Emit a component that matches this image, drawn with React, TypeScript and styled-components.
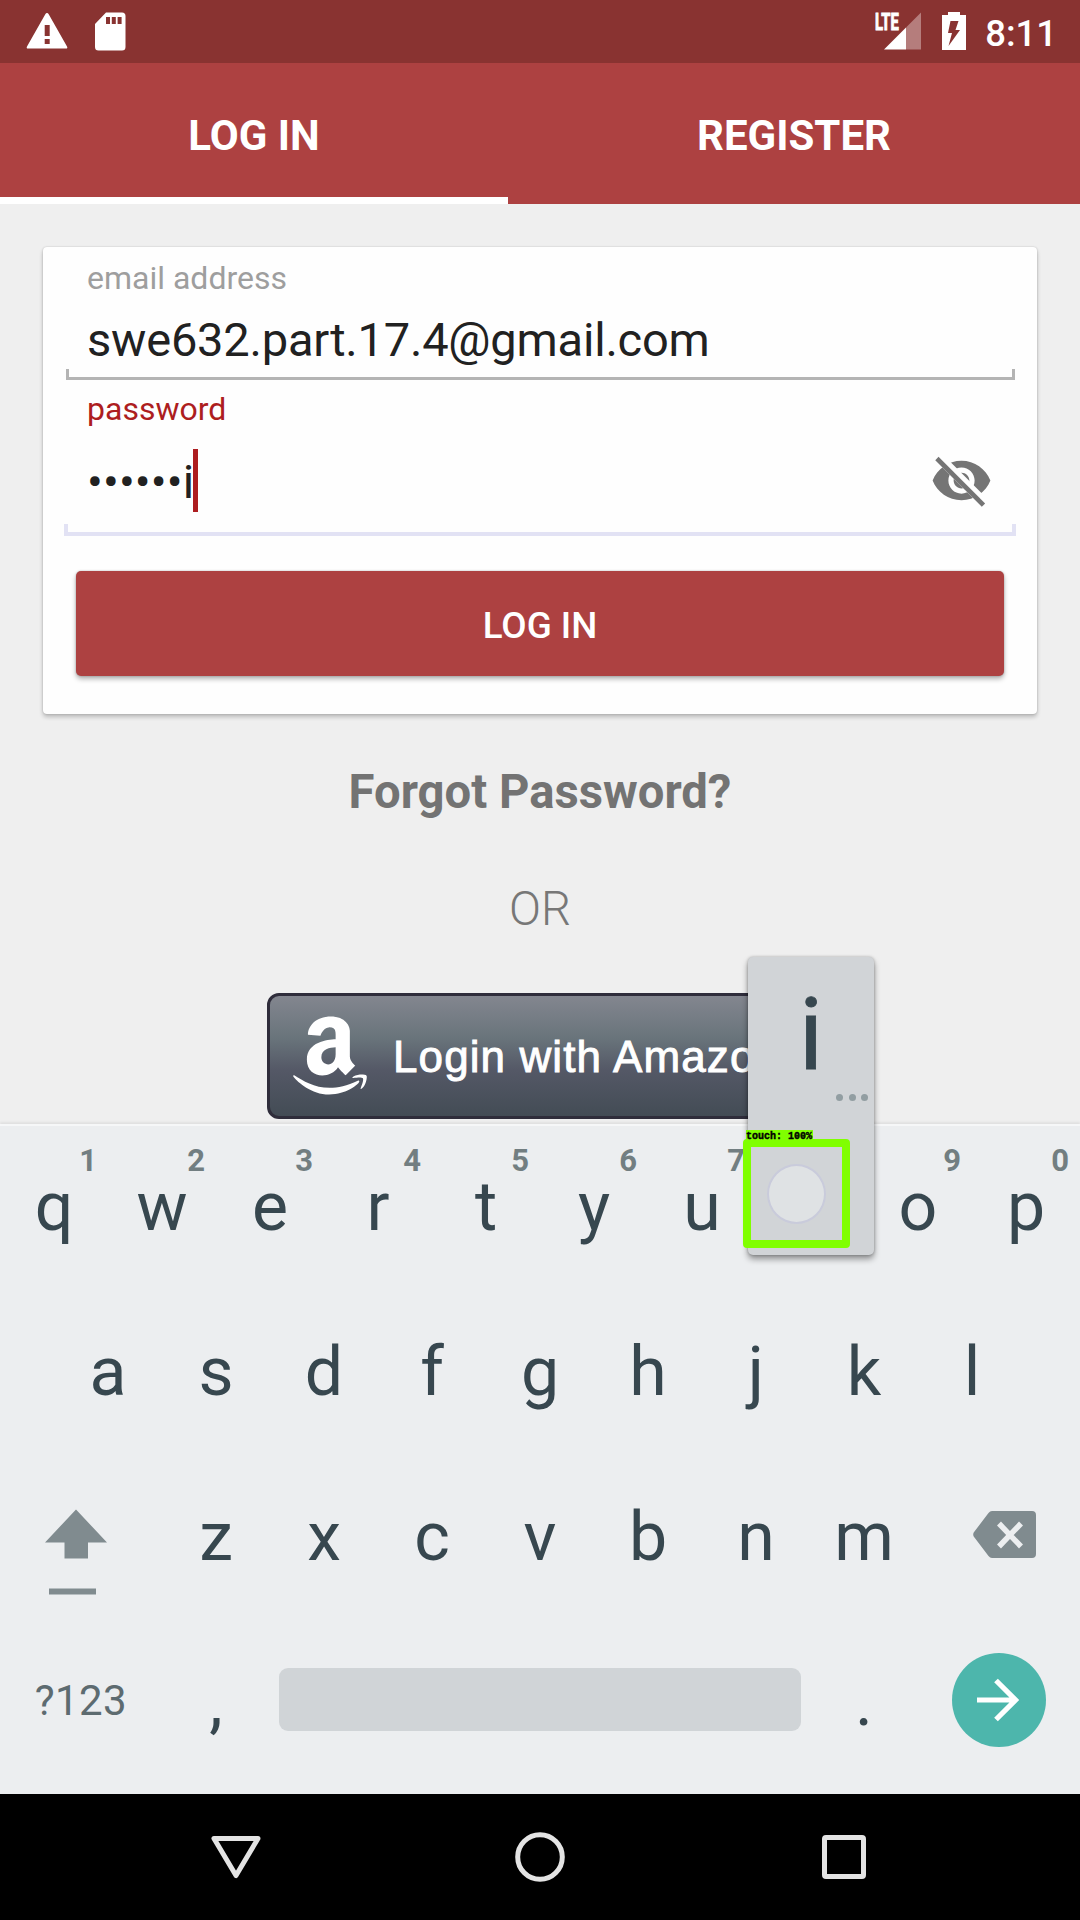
import React from 'react';
import styled, { createGlobalStyle } from 'styled-components';
import { FaAmazon } from 'react-icons/fa';

const GlobalStyle = createGlobalStyle`
  * { box-sizing: border-box; }
  body { margin: 0; background: #efefef; font-family: Roboto, "Noto Sans", sans-serif; }
  button { font: inherit; border: 0; padding: 0; background: none; color: inherit; }
  svg { display: block; flex: none; }
`;

const Screen = styled.div`
  position: relative;
  display: flex;
  flex-direction: column;
  width: 1080px;
  height: 1920px;
  overflow: hidden;
`;

/* Status bar */
const StatusBar = styled.header`
  display: flex;
  justify-content: space-between;
  height: 63px;
  padding: 12px 23px 0 26px;
  background: #893331;
  color: #fff;
`;
const StatusGroup = styled.div<{ $gap: number }>`
  display: flex;
  align-items: flex-start;
  gap: ${(p) => p.$gap}px;
`;
const Signal = styled.div`
  display: flex;
  align-items: flex-start;
`;
const NetworkType = styled.span`
  width: 9px;
  padding-top: 2px;
  font-size: 23px;
  line-height: 18px;
  font-weight: 700;
  white-space: nowrap;
  transform: scaleX(0.64);
  transform-origin: left;
  -webkit-text-stroke: 1px #fff;
`;
const Clock = styled.time`
  margin-left: -2px;
  font-size: 36.5px;
  font-weight: 500;
  line-height: 43px;
`;

/* Tabs */
const Tabs = styled.nav`
  display: flex;
  height: 141px;
  background: #ad4141;
`;
const Tab = styled.button<{ $width: number; $active?: boolean }>`
  width: ${(p) => p.$width}px;
  padding-top: 10px;
  border-bottom: 7px solid ${(p) => (p.$active ? '#fff' : 'transparent')};
  color: #fff;
  font-size: 42px;
  font-weight: 700;
`;

/* Login form */
const Content = styled.main`
  display: flex;
  flex-direction: column;
  align-items: center;
  height: 920px;
  padding-top: 43px;
  overflow: hidden;
  background: #efefef;
`;
const Card = styled.div`
  display: flex;
  flex-direction: column;
  flex: none;
  width: 994px;
  height: 467px;
  padding: 12px 21px 0;
  border-radius: 4px;
  background: #fefefe;
  box-shadow: 0 0 2px rgba(0, 0, 0, 0.2), 0 3px 4px rgba(0, 0, 0, 0.22);
`;
const Field = styled.div<{ $height: number }>`
  display: flex;
  flex-direction: column;
  height: ${(p) => p.$height}px;
`;
const FieldLabel = styled.label<{ $color: string; $top?: number }>`
  height: 38px;
  margin-top: ${(p) => p.$top ?? 0}px;
  padding-left: 23px;
  font-size: 32px;
  line-height: 38px;
  color: ${(p) => p.$color};
`;
const FieldValue = styled.div<{ $top: number }>`
  display: flex;
  align-items: center;
  height: 63px;
  margin-top: ${(p) => p.$top}px;
  padding: 0 23px;
  font-size: 47px;
  line-height: 56px;
  letter-spacing: -0.2px;
  color: #212121;
`;
const Secret = styled.span`
  padding-top: 3px;
  letter-spacing: 0.1px;
`;
const Cursor = styled.span`
  width: 5px;
  height: 63px;
  margin-left: -1px;
  background: #ad1d20;
`;
const Reveal = styled.button`
  margin-left: auto;
`;
const Bracket = styled.div<{ $active?: boolean }>`
  height: ${(p) => (p.$active ? 12 : 11)}px;
  margin: auto ${(p) => (p.$active ? '0 0 0' : '1px 0 2px')};
  border: ${(p) => (p.$active ? '4px solid #e2e2f4' : '3px solid #b4b4b4')};
  border-top: 0;
`;
const SubmitButton = styled.button`
  height: 105px;
  margin: 35px 12px 0;
  padding-top: 3px;
  border-radius: 5px;
  background: #ad4141;
  box-shadow: 0 0 2px rgba(0, 0, 0, 0.25), 0 3px 5px rgba(0, 0, 0, 0.3);
  color: #fff;
  font-size: 36.75px;
  font-weight: 500;
`;
const Forgot = styled.a`
  margin-top: 50px;
  font-size: 47.25px;
  line-height: 56px;
  font-weight: 700;
  color: #737373;
`;
const Or = styled.div`
  margin-top: 61px;
  font-size: 47.25px;
  line-height: 56px;
  font-weight: 300;
  color: #777;
`;
const AmazonButton = styled.button`
  display: flex;
  align-items: center;
  flex: none;
  width: 546px;
  height: 126px;
  margin-top: 56px;
  padding-left: 22px;
  border: 3px solid #2f2d3b;
  border-radius: 12px;
  background: linear-gradient(#83868f, #69747b 35%, #545866 62%, #434c55);
  color: #fff;
`;
const AmazonMark = styled(FaAmazon)`
  width: 76px;
  height: 89px;
  margin-bottom: 2px;
`;
const AmazonText = styled.span`
  margin-left: 25px;
  padding-top: 2px;
  font-family: "Liberation Sans", Arial, sans-serif;
  font-size: 44px;
  letter-spacing: 1.1px;
  white-space: nowrap;
  -webkit-text-stroke: 0.9px #fff;
`;

/* Keyboard */
const Keyboard = styled.section`
  height: 670px;
  background: #eceef0;
  box-shadow: inset 0 2px #f6f7f8, 0 -2px 2px rgba(0, 0, 0, 0.06);
  color: #37474f;
`;
const KeyRow = styled.div`
  display: flex;
  justify-content: center;
  height: 165px;
`;
const Key = styled.button<{ $width?: number }>`
  position: relative;
  display: flex;
  align-items: center;
  justify-content: center;
  width: ${(p) => p.$width ?? 108}px;
  height: 165px;
  font-size: 68px;
  line-height: 80px;
`;
const Hint = styled.span`
  position: absolute;
  top: 19px;
  right: 11px;
  font-size: 31px;
  line-height: 36px;
  font-weight: 700;
  color: #727e81;
`;
const ShiftIcon = styled.svg`
  margin: 30px 1px 0 0;
`;
const BackspaceIcon = styled.svg`
  margin: -4px 0 0 11px;
`;
const SymbolsLabel = styled.span`
  margin-top: -2px;
  font-size: 42px;
  line-height: 48px;
  letter-spacing: 0.4px;
  color: #5d6b70;
`;
const Spacebar = styled.button`
  width: 522px;
  height: 63px;
  margin: 49px 9px 0;
  border-radius: 9px;
  background: #d0d4d7;
`;
const Enter = styled.span`
  display: flex;
  align-items: center;
  justify-content: center;
  width: 94px;
  height: 94px;
  margin-top: -3px;
  padding-right: 2px;
  border-radius: 50%;
  background: #4db6ac;
`;

/* Key preview and touch marker float above the keyboard */
const Preview = styled.div`
  position: absolute;
  left: 748px;
  top: 957px;
  display: flex;
  flex-direction: column;
  align-items: center;
  width: 126px;
  height: 298px;
  padding-top: 19px;
  border-radius: 5px;
  background: #d1d4d7;
  box-shadow: 0 0 3px rgba(0, 0, 0, 0.25), 0 4px 6px rgba(0, 0, 0, 0.4);
  color: #37474f;
  font-size: 101px;
  line-height: 118px;
  -webkit-text-stroke: 0.8px #37474f;
`;
const MoreDots = styled.div`
  display: flex;
  align-self: flex-end;
  gap: 5.5px;
  padding-right: 6px;
`;
const Dot = styled.i`
  width: 7px;
  height: 7px;
  border-radius: 50%;
  background: #929ea2;
`;
const Touch = styled.div`
  position: absolute;
  left: 743px;
  top: 1139px;
  display: flex;
  align-items: center;
  justify-content: center;
  width: 107px;
  height: 109px;
  border: 8px solid #80ff00;
  border-radius: 4px;
`;
const TouchLabel = styled.span`
  position: absolute;
  left: -5px;
  top: -17px;
  width: 67px;
  height: 12px;
  background: #80ff00;
  color: #000;
  font: 700 10px/14px "Liberation Mono", "Courier New", monospace;
  white-space: nowrap;
  -webkit-text-stroke: 0.4px #000;
`;
const TouchPoint = styled.span`
  width: 59px;
  height: 60px;
  border: 2px solid #c9cbdb;
  border-radius: 50%;
  background: #dfe2e4;
`;

const NavBar = styled.footer`
  display: flex;
  align-items: flex-start;
  justify-content: center;
  gap: 253px;
  height: 126px;
  padding-top: 38px;
  background: #000;
`;

const numberRow = ['q', 'w', 'e', 'r', 't', 'y', 'u', '', 'o', 'p'];
const hints = ['1', '2', '3', '4', '5', '6', '7', '', '9', '0'];

export default function App() {
  return (
    <Screen>
      <GlobalStyle />
      <StatusBar>
        <StatusGroup $gap={27}>
          <svg width="42" height="38" viewBox="0 0 42 38">
            <path fill="#fff" fillRule="evenodd" d="M21 1q1 0 1.7 1.2L41 34.500q1 2-1 2H2q-2 0-1-2L19.300 2.200Q20 1 21 1ZM18.700 13v11h5V13ZM18.700 27v5h5v-5Z" />
          </svg>
          <svg width="31" height="39" viewBox="0 0 31 39">
            <path fill="#fff" fillRule="evenodd" d="M11 .5h16q3.500 0 3.500 3.500v31q0 3.500-3.500 3.500H3.500Q0 38.500 0 35V12ZM11 5v7h4V5ZM16.800 5v7h4V5ZM22.600 5v7h4V5Z" />
          </svg>
        </StatusGroup>
        <StatusGroup $gap={21}>
          <Signal>
            <NetworkType>LTE</NetworkType>
            <svg width="37" height="38" viewBox="0 0 37 38">
              <path fill="#b57d7c" d="M37 .5v37H22V15.500Z" />
              <path fill="#fff" d="M22 15.500v22H0Z" />
            </svg>
          </Signal>
          <svg width="24" height="38" viewBox="0 0 24 38">
            <path fill="#fff" fillRule="evenodd" d="M6 0h12v3h6v35H0V3h6ZM8.500 9 6 21h4L6.500 34 18 18h-4.500L16.500 9Z" />
          </svg>
          <Clock>8:11</Clock>
        </StatusGroup>
      </StatusBar>
      <Tabs>
        <Tab $width={508} $active>LOG IN</Tab>
        <Tab $width={572}>REGISTER</Tab>
      </Tabs>
      <Content>
        <Card>
          <Field $height={121}>
            <FieldLabel $color="#9e9e9e">email address</FieldLabel>
            <FieldValue $top={13}>swe632.part.17.4@gmail.com</FieldValue>
            <Bracket />
          </Field>
          <Field $height={156}>
            <FieldLabel $color="#ad1d20" $top={10}>password</FieldLabel>
            <FieldValue $top={21}>
              <Secret>••••••i</Secret>
              <Cursor />
              <Reveal aria-label="Show password">
                <svg width="63" height="63" viewBox="0 0 24 24">
                  <path fill="#757575" d="M12 4.500C7 4.500 2.730 7.610 1 12c1.730 4.390 6 7.500 11 7.500s9.270-3.110 11-7.500c-1.730-4.390-6-7.500-11-7.500zM12 17c-2.760 0-5-2.240-5-5s2.240-5 5-5 5 2.240 5 5-2.240 5-5 5zm0-8c-1.660 0-3 1.340-3 3s1.340 3 3 3 3-1.340 3-3-1.340-3-3-3z" />
                  <path fill="#fefefe" d="M2 4.270 19.730 22 22.270 19.460 4.540 1.730Z" />
                  <path fill="none" stroke="#757575" strokeWidth="1.8" strokeLinecap="square" d="M3.270 4.270 19.740 20.740" />
                </svg>
              </Reveal>
            </FieldValue>
            <Bracket $active />
          </Field>
          <SubmitButton>LOG IN</SubmitButton>
        </Card>
        <Forgot>Forgot Password?</Forgot>
        <Or>OR</Or>
        <AmazonButton>
          <AmazonMark preserveAspectRatio="none" />
          <AmazonText>Login with Amazon</AmazonText>
        </AmazonButton>
      </Content>
      <Keyboard>
        <KeyRow>
          {numberRow.map((k, i) => (
            <Key key={i}>
              {k}
              <Hint>{hints[i]}</Hint>
            </Key>
          ))}
        </KeyRow>
        <KeyRow>
          {[...'asdfghjkl'].map((k) => <Key key={k}>{k}</Key>)}
        </KeyRow>
        <KeyRow>
          <Key $width={162} aria-label="Shift">
            <ShiftIcon width="72" height="86" viewBox="0 0 72 86">
              <path fill="#808b8f" d="M31 .5 62 33.500H43v16H19.500V33.500H0ZM4 79.500h47v6H4Z" />
            </ShiftIcon>
          </Key>
          {[...'zxcvbnm'].map((k) => <Key key={k}>{k}</Key>)}
          <Key $width={162} aria-label="Backspace">
            <BackspaceIcon width="63" height="47" viewBox="0 0 63 47">
              <path fill="#808b8f" d="M19 0h40q4 0 4 4v39q0 4-4 4H19q-2 0-3.500-2L.7 25.500q-1-2 0-4L15.500 2Q17 0 19 0Z" />
              <path stroke="#eceef0" strokeWidth="5.500" d="m26 12.500 22 23m0-23-22 23" />
            </BackspaceIcon>
          </Key>
        </KeyRow>
        <KeyRow>
          <Key $width={162}><SymbolsLabel>?123</SymbolsLabel></Key>
          <Key>,</Key>
          <Spacebar aria-label="Space" />
          <Key>.</Key>
          <Key $width={162} aria-label="Next">
            <Enter>
              <svg width="44" height="44" viewBox="0 0 44 44">
                <path fill="none" stroke="#fff" strokeWidth="5.200" d="M1 22h38M20 2.500 39.500 22 20 41.500" />
              </svg>
            </Enter>
          </Key>
        </KeyRow>
      </Keyboard>
      <NavBar>
        <svg width="52" height="50" viewBox="0 0 52 50">
          <path fill="none" stroke="#e4e4e4" strokeWidth="5" strokeLinejoin="round" d="M4 6.500h44L26 43.500Z" />
        </svg>
        <svg width="50" height="50" viewBox="0 0 50 50">
          <circle cx="25" cy="25" r="22.300" fill="none" stroke="#e4e4e4" strokeWidth="5" />
        </svg>
        <svg width="52" height="50" viewBox="0 0 52 50">
          <rect x="6.500" y="5.500" width="39" height="39" rx="1.500" fill="none" stroke="#e4e4e4" strokeWidth="5" />
        </svg>
      </NavBar>
      <Preview>
        i
        <MoreDots><Dot /><Dot /><Dot /></MoreDots>
      </Preview>
      <Touch>
        <TouchLabel>touch: 100%</TouchLabel>
        <TouchPoint />
      </Touch>
    </Screen>
  );
}
